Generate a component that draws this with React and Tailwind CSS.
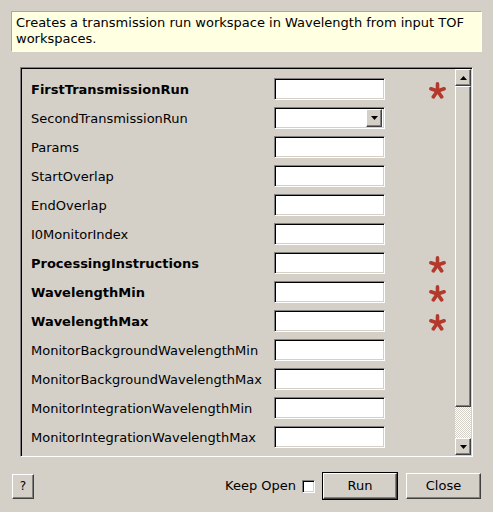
import React from 'react';

const rows = [
  { label: 'FirstTransmissionRun', bold: true, required: true },
  { label: 'SecondTransmissionRun', combo: true },
  { label: 'Params' },
  { label: 'StartOverlap' },
  { label: 'EndOverlap' },
  { label: 'I0MonitorIndex' },
  { label: 'ProcessingInstructions', bold: true, required: true },
  { label: 'WavelengthMin', bold: true, required: true },
  { label: 'WavelengthMax', bold: true, required: true },
  { label: 'MonitorBackgroundWavelengthMin' },
  { label: 'MonitorBackgroundWavelengthMax' },
  { label: 'MonitorIntegrationWavelengthMin' },
  { label: 'MonitorIntegrationWavelengthMax' },
];

// classic sunken / raised bevels
const sunken =
  'border border-t-[#808080] border-l-[#808080] border-r-white border-b-white shadow-[inset_1px_1px_0_#000,inset_-1px_-1px_0_#d4d0c8]';
const raised =
  'border border-t-white border-l-white border-r-[#404040] border-b-[#404040] shadow-[inset_-1px_-1px_0_#808080]';

const Asterisk = () => (
  <svg width="17" height="17" viewBox="0 0 16 16" className="mt-[3px]">
    <g stroke="#b3392c" strokeWidth="3.4" strokeLinecap="round">
      <line x1="8" y1="8.5" x2="8" y2="1.8" />
      <line x1="8" y1="8.5" x2="14.2" y2="6.4" />
      <line x1="8" y1="8.5" x2="11.9" y2="14" />
      <line x1="8" y1="8.5" x2="4.1" y2="14" />
      <line x1="8" y1="8.5" x2="1.8" y2="6.4" />
    </g>
  </svg>
);

const Arrow = ({ up }) => (
  <svg width="7" height="4" viewBox="0 0 7 4">
    <polygon points={up ? '3.5,0 7,4 0,4' : '0,0 7,0 3.5,4'} fill="#000" />
  </svg>
);

const Field = ({ combo }) => (
  <div className={`w-[111px] h-[22px] bg-white flex justify-end items-center pr-[1px] ${sunken}`}>
    {combo && (
      <div className={`w-[16px] h-[18px] bg-[#d4d0c8] flex items-center justify-center mr-[1px] ${raised}`}>
        <Arrow />
      </div>
    )}
  </div>
);

export default function App() {
  return (
    <div className="w-[493px] h-[512px] bg-[#d4d0c8] text-black text-[13px] flex flex-col font-['DejaVu_Sans','Liberation_Sans',sans-serif] overflow-hidden">
      <div className="mx-[11px] mt-[11px] h-[41px] bg-[#ffffe1] border border-[#a8a8a0] border-r-white border-b-white px-[4px] pt-[3px] leading-[16px]">
        Creates a transmission run workspace in Wavelength from input TOF workspaces.
      </div>

      <div className="mx-[20px] mt-[15px] h-[390px] flex border border-t-[#808080] border-l-[#808080] border-r-white border-b-white shadow-[inset_1px_1px_0_#000]">
        <div className="flex-1 overflow-hidden pl-[10px] pt-[10px] flex flex-col gap-[7px]">
          {rows.map((r) => (
            <div key={r.label} className="h-[22px] flex items-center shrink-0">
              <span className={`w-[243px] whitespace-nowrap pt-[1px] ${r.bold ? 'font-bold' : ''}`}>{r.label}</span>
              <Field combo={r.combo} />
              <div className="w-[69px] flex justify-end pr-[8px]">{r.required && <Asterisk />}</div>
            </div>
          ))}
        </div>
        <div className="w-[16px] mt-[1px] mb-[1px] mr-[1px] flex flex-col">
          <div className={`h-[17px] bg-[#d4d0c8] flex items-center justify-center ${raised}`}>
            <Arrow up />
          </div>
          <div className={`h-[321px] bg-[#d4d0c8] ${raised}`} />
          <div className="flex-1 bg-[repeating-conic-gradient(#ffffff_0_25%,#d4d0c8_0_50%)] bg-[length:2px_2px]" />
          <div className={`h-[17px] bg-[#d4d0c8] flex items-center justify-center ${raised}`}>
            <Arrow />
          </div>
        </div>
      </div>

      <div className="mt-[15px] px-[12px] flex items-center">
        <button className={`w-[22px] h-[25px] bg-[#d4d0c8] text-[12px] ${raised}`}>?</button>
        <div className="flex-1" />
        <span className="mr-[6px]">Keep Open</span>
        <div className={`w-[13px] h-[13px] bg-white ${sunken}`} />
        <div className="ml-[7px] border border-black">
          <button className={`w-[74px] h-[26px] bg-[#d4d0c8] ${raised}`}>Run</button>
        </div>
        <button className={`ml-[8px] w-[75px] h-[26px] bg-[#d4d0c8] ${raised}`}>Close</button>
      </div>
    </div>
  );
}
